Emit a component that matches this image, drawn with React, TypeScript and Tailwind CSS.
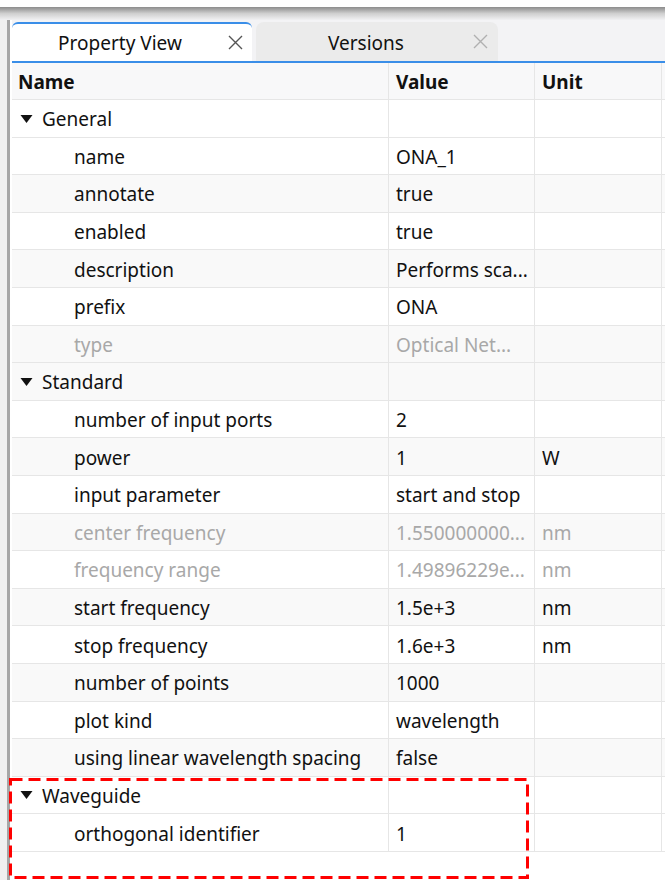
type Row = {
  name: string;
  value?: string;
  unit?: string;
  group?: boolean;
  muted?: boolean;
  alt?: boolean;
};

const rows: Row[] = [
  { name: "General", group: true },
  { name: "name", value: "ONA_1" },
  { name: "annotate", value: "true", alt: true },
  { name: "enabled", value: "true" },
  { name: "description", value: "Performs sca...", alt: true },
  { name: "prefix", value: "ONA" },
  { name: "type", value: "Optical Net...", muted: true, alt: true },
  { name: "Standard", group: true, alt: true },
  { name: "number of input ports", value: "2" },
  { name: "power", value: "1", unit: "W", alt: true },
  { name: "input parameter", value: "start and stop" },
  { name: "center frequency", value: "1.550000000...", unit: "nm", muted: true, alt: true },
  { name: "frequency range", value: "1.49896229e...", unit: "nm", muted: true },
  { name: "start frequency", value: "1.5e+3", unit: "nm", alt: true },
  { name: "stop frequency", value: "1.6e+3", unit: "nm" },
  { name: "number of points", value: "1000", alt: true },
  { name: "plot kind", value: "wavelength" },
  { name: "using linear wavelength spacing", value: "false", alt: true },
  { name: "Waveguide", group: true },
  { name: "orthogonal identifier", value: "1" },
];

function CloseIcon({ className }: { className: string }) {
  return (
    <svg width="15" height="15" viewBox="0 0 15 15" className={className}>
      <path d="M1 1L14 14M14 1L1 14" stroke="currentColor" strokeWidth="1.4" fill="none" />
    </svg>
  );
}

function TableRow({ row }: { row: Row }) {
  const text = row.muted ? "text-[#a8a8a8]" : "text-[#111]";
  return (
    <div
      className={`grid grid-cols-[377px_146px_127px] h-[37.6px] border-b border-[#e6e6e6] ${
        row.alt ? "bg-[#f9f9f9]" : "bg-white"
      }`}
    >
      <div className={`flex items-center pt-[3px] border-r border-[#e6e6e6] ${text}`}>
        {row.group ? (
          <div className="flex items-center pl-[8px]">
            <svg width="13" height="10" viewBox="0 0 13 10" className="mr-[9px] -mt-[2px]">
              <path d="M0.5 1L12.5 1L6.5 9Z" fill="#111" />
            </svg>
            <span>{row.name}</span>
          </div>
        ) : (
          <span className="pl-[62px]">{row.name}</span>
        )}
      </div>
      <div className={`flex items-center pt-[3px] pl-[7px] border-r border-[#e6e6e6] ${text}`}>
        {row.value}
      </div>
      <div className={`flex items-center pt-[3px] pl-[7px] border-r border-[#e6e6e6] ${text}`}>
        {row.unit}
      </div>
    </div>
  );
}

export default function App() {
  return (
    <div
      className="w-[665px] h-[880px] bg-white overflow-hidden flex flex-col text-[19px] leading-none"
      style={{ fontFamily: '"Noto Sans", "Open Sans", sans-serif' }}
    >
      <div className="h-[7px] bg-white" />
      <div className="h-[13px] bg-gradient-to-b from-[#8c8c8c] via-[#cfcfcf] to-[#f1f1f3]" />
      <div className="flex flex-1 min-h-0">
        <div className="w-[7px] bg-[#f0f0f0]" />
        <div className="w-[3px] bg-[#a6a6a6]" />
        <div className="w-[2px] bg-white" />
        <div className="flex-1 flex flex-col min-w-0 bg-[#f3f3f5] relative">
          {/* tabs */}
          <div className="flex h-[41px] items-end gap-[4px] pt-[2px]">
            <div className="w-[240px] h-[39px] bg-white border-t-2 border-[#3a8ee8] rounded-t-[6px] flex items-center pt-[2px] relative">
              <span className="w-[216px] text-center text-[#111]">Property View</span>
              <CloseIcon className="absolute right-[9px] top-[11px] text-[#555]" />
            </div>
            <div className="w-[242px] h-[39px] bg-[#ebebeb] rounded-t-[8px] flex items-center pt-[3px] relative">
              <span className="w-[220px] text-center text-[#111]">Versions</span>
              <CloseIcon className="absolute right-[10px] top-[12px] text-[#b0b0b0]" />
            </div>
          </div>
          <div className="h-[2px] bg-[#3a8ee8]" />
          {/* table */}
          <div className="flex-1 bg-white">
            <div className="grid grid-cols-[377px_146px_127px] h-[37px] bg-[#f8f8f9] border-b border-[#e6e6e6] font-bold text-[#111]">
              <div className="flex items-center pt-[3px] pl-[6px] border-r border-[#e6e6e6]">Name</div>
              <div className="flex items-center pt-[3px] pl-[7px] border-r border-[#e6e6e6]">Value</div>
              <div className="flex items-center pt-[3px] pl-[7px] border-r border-[#e6e6e6]">Unit</div>
            </div>
            {rows.map((r) => (
              <TableRow key={r.name} row={r} />
            ))}
          </div>
          {/* annotation box */}
          <svg className="absolute left-[-3px] top-[758px]" width="520" height="101">
            <rect
              x="1.5"
              y="1.5"
              width="517"
              height="98"
              fill="none"
              stroke="#ff0000"
              strokeWidth="3"
              strokeDasharray="12 6"
            />
          </svg>
        </div>
      </div>
    </div>
  );
}
